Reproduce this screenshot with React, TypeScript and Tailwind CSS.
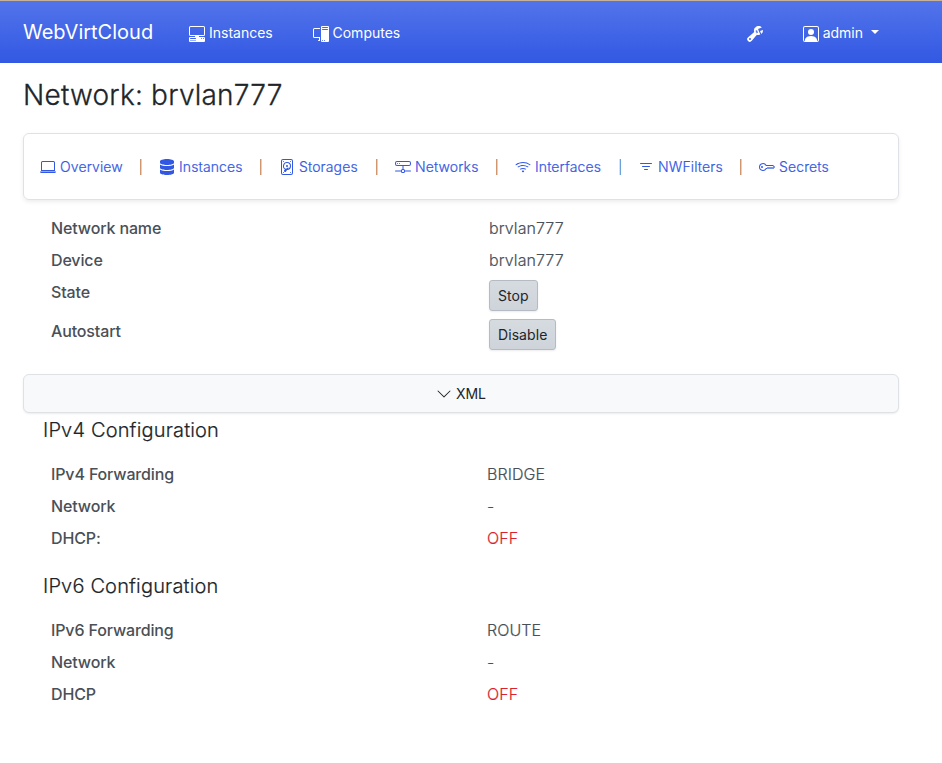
import React from 'react';
import {
  BsChevronDown, BsDeviceHdd, BsFilter, BsHddNetwork, BsKey, BsLaptop,
  BsPcDisplay, BsPcDisplayHorizontal, BsPersonSquare, BsWifi, BsWrenchAdjustable,
} from 'react-icons/bs';
import { FaDatabase } from 'react-icons/fa';

const warm = 'bg-[#cf9670] border-[#b9dcf3]';
const cool = 'bg-[#f0dcc8] border-[#6da3dc]';

const tabs = [
  { label: 'Overview', Icon: BsLaptop, box: 'w-[100px]', line: warm },
  { label: 'Instances', Icon: FaDatabase, box: 'w-[101px]', line: warm },
  { label: 'Storages', Icon: BsDeviceHdd, box: 'w-[97px]', line: warm },
  { label: 'Networks', Icon: BsHddNetwork, box: 'w-[101px]', line: warm },
  { label: 'Interfaces', Icon: BsWifi, box: 'w-[104px]', line: cool },
  { label: 'NWFilters', Icon: BsFilter, box: 'w-[102px]', line: warm },
  { label: 'Secrets', Icon: BsKey, box: 'w-[80px]', line: '' },
];

function Row({ label, children, tall = false }: { label: string; children: React.ReactNode; tall?: boolean }) {
  return (
    <div className={`flex ${tall ? 'h-[39px]' : 'h-8'}`}>
      <div className="w-[438px] pt-1 font-medium tracking-[-0.14px]">{label}</div>
      <div className="pt-1 tracking-[0.08px] [-webkit-text-stroke:0.2px]">{children}</div>
    </div>
  );
}

function Button({ children }: { children: React.ReactNode }) {
  return (
    <button className="block h-[31px] rounded-[3px] border border-[#b5bbc3] bg-linear-to-b from-[#d6dbe0] to-[#ced4da] px-2 text-sm leading-[21px] font-normal tracking-[0.08px] text-[#212529] shadow-[0_1px_2px_rgba(0,0,0,0.08)] [-webkit-text-stroke:0]">
      {children}
    </button>
  );
}

function Config({ version, mode, dhcp }: { version: string; mode: string; dhcp: string }) {
  return (
    <section>
      <h2 className="ml-5 text-xl leading-6 tracking-[0.16px] text-[#212529] [-webkit-text-stroke:0.2px]">{version} Configuration</h2>
      <div className="mt-4 pl-7 text-[#495057] [&>div>div:first-child]:w-[436px]">
        <Row label={`${version} Forwarding`}>{mode}</Row>
        <Row label="Network">-</Row>
        <Row label={dhcp}><span className="text-[#d9232e]">OFF</span></Row>
      </div>
    </section>
  );
}

export default function App() {
  return (
    <div className="min-h-[763px] bg-white font-['Inter','Liberation_Sans',sans-serif] text-base font-light text-[#212529]">
      <nav className="flex h-[63px] items-center border-t border-[#c6b19a] bg-linear-to-b from-[#5273ea] to-[#3258e3] pl-[23px] text-sm font-normal text-white">
        <span className="w-[166px] text-xl leading-[30px]">WebVirtCloud</span>
        <a className="flex w-[124px] items-center gap-1 pt-[3px]"><BsPcDisplayHorizontal className="size-4" /><span className="-mt-0.5">Instances</span></a>
        <a className="flex items-center gap-[3.5px] pt-[3px]"><BsPcDisplay className="size-4" /><span className="-mt-0.5">Computes</span></a>
        <span className="ml-auto mr-10 pt-[3px]"><BsWrenchAdjustable className="size-4" /></span>
        <a className="mr-[63px] flex items-center gap-1 pt-[3px]">
          <BsPersonSquare className="size-4" /><span className="-mt-0.5">admin</span>
          <span className="ml-1 mb-1 border-x-4 border-t-4 border-x-transparent border-t-white" />
        </a>
      </nav>
      <main className="ml-[23px] w-[876px]">
        <h1 className="pt-[15px] text-[28px] leading-[34px] tracking-[0.21px] [-webkit-text-stroke:0.3px]">Network: brvlan777</h1>
        <div className="mt-[21px] flex h-[67px] items-center rounded-md border border-[#dee2e6] pl-4 text-sm tracking-[0.13px] text-[#3258e3] shadow-[0_2px_4px_rgba(0,0,0,0.075)]">
          {tabs.map(({ label, Icon, box, line }) => (
            <React.Fragment key={label}>
              <a className={`flex shrink-0 items-center gap-1 ${box}`}><Icon className="size-4 shrink-0" /><span className="[-webkit-text-stroke:0.2px]">{label}</span></a>
              {line && <span className={`mr-[17px] h-4 w-0.5 shrink-0 border-r ${line}`} />}
            </React.Fragment>
          ))}
        </div>
        <div className="pt-3 pl-7 text-[#495057]">
          <Row label="Network name">brvlan777</Row>
          <Row label="Device">brvlan777</Row>
          <Row label="State" tall><Button>Stop</Button></Row>
          <Row label="Autostart" tall><Button>Disable</Button></Row>
        </div>
        <button className="mt-5 flex h-[39px] w-full items-center justify-center gap-1 rounded-md border border-[#dee2e6] bg-[#f8f9fa] text-sm font-normal tracking-[-0.1px] shadow-[0_1px_2px_rgba(0,0,0,0.075)]">
          <BsChevronDown className="size-4" />XML
        </button>
        <div className="flex flex-col gap-5 pt-[5px]">
          <Config version="IPv4" mode="BRIDGE" dhcp="DHCP:" />
          <Config version="IPv6" mode="ROUTE" dhcp="DHCP" />
        </div>
      </main>
    </div>
  );
}
